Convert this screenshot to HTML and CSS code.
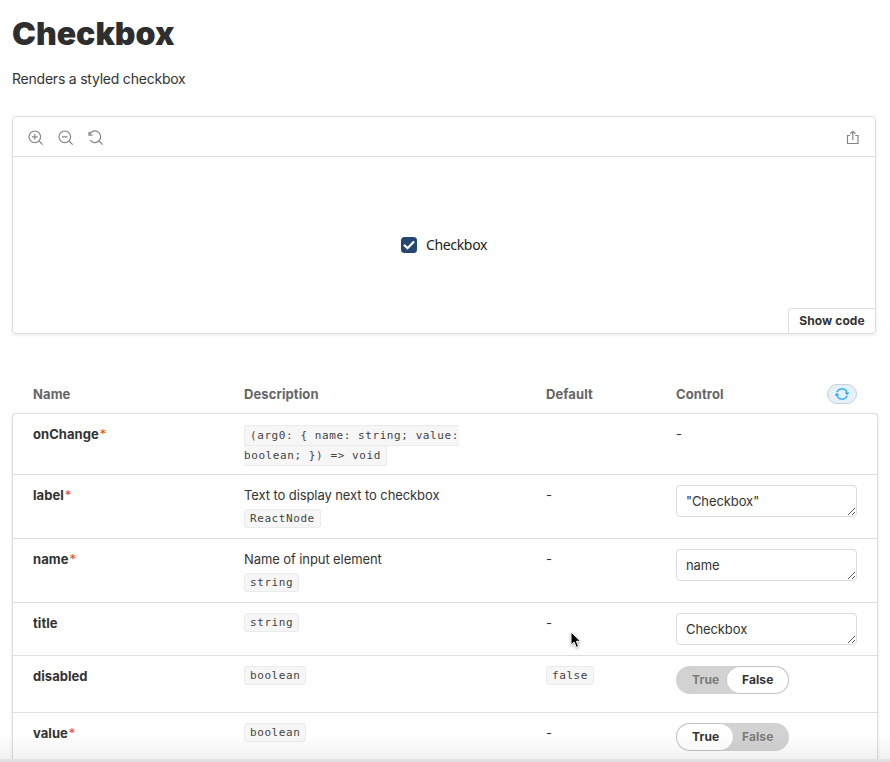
FILE: index.html
```html
<!DOCTYPE html>
<html lang="en">
<head>
<meta charset="utf-8">
<title>Checkbox</title>
<link rel="stylesheet" href="styles.css">
</head>
<body>
<main class="page">
  <h1 class="title"><span>Checkbox</span></h1>
  <p class="subtitle">Renders a styled checkbox</p>

  <section class="preview">
    <div class="toolbar">
      <svg class="icon" viewBox="0 0 16 16"><circle cx="6.8" cy="6.8" r="5.8"/><path d="M11 11l3.7 3.7M6.8 4v5.6M4 6.8h5.6"/></svg>
      <svg class="icon" viewBox="0 0 16 16"><circle cx="6.8" cy="6.8" r="5.8"/><path d="M11 11l3.7 3.7M4 6.8h5.6"/></svg>
      <svg class="icon" viewBox="0 0 16 16"><path d="M1 1.7v3.5h3.5M1.3 5A5.8 5.8 0 1 1 2 10M11 11l3.7 3.7"/></svg>
      <svg class="icon share" viewBox="0 0 16 16"><path d="M5.2 5.5H2.5v8h10.5V5.5h-2.7M7.8 10V1.5M5.3 3.7l2.5-2.4 2.5 2.4"/></svg>
    </div>
    <div class="stage">
      <label class="check">
        <svg class="box" viewBox="0 0 16 16"><rect width="16" height="16" rx="3.5"/><path d="M3 7.8l3.5 3.4 6.5-6.8"/></svg>
        <span>Checkbox</span>
      </label>
    </div>
    <div class="show-code">Show code</div>
  </section>

  <section class="args">
    <div class="row head">
      <span>Name</span><span>Description</span><span>Default</span>
      <span class="control-head"><span>Control</span>
        <span class="reset"><svg viewBox="0 0 14 14"><path d="M2 5.2A5.3 5.3 0 0 1 12.2 6.6M12 8.8A5.3 5.3 0 0 1 1.8 7.4M10.3 5.6l1.9 1.5 1.6-1.5M.2 8.4L1.8 6.9l1.9 1.5"/></svg></span>
      </span>
    </div>
    <div class="table">
      <div class="row r1">
        <div class="name">onChange<i>*</i></div>
        <div class="signature"><code>(arg0: { name: string; value:<br>boolean; }) =&gt; void</code></div>
        <div></div>
        <div>-</div>
      </div>
      <div class="row r2">
        <div class="name">label<i>*</i></div>
        <div>Text to display next to checkbox<div class="type"><code>ReactNode</code></div></div>
        <div>-</div>
        <div class="control"><div class="field">"Checkbox"<svg viewBox="0 0 9 9"><path d="M1 8l7-7M5 8l3-3"/></svg></div></div>
      </div>
      <div class="row r2">
        <div class="name">name<i>*</i></div>
        <div>Name of input element<div class="type"><code>string</code></div></div>
        <div>-</div>
        <div class="control"><div class="field">name<svg viewBox="0 0 9 9"><path d="M1 8l7-7M5 8l3-3"/></svg></div></div>
      </div>
      <div class="row r3">
        <div class="name">title</div>
        <div class="chip"><code>string</code></div>
        <div>-</div>
        <div class="control"><div class="field">Checkbox<svg viewBox="0 0 9 9"><path d="M1 8l7-7M5 8l3-3"/></svg></div></div>
      </div>
      <div class="row r4">
        <div class="name">disabled</div>
        <div class="chip"><code>boolean</code></div>
        <div class="chip"><code>false</code></div>
        <div class="control"><div class="toggle"><span class="t">True</span><span class="f on">False</span></div></div>
      </div>
      <div class="row r5">
        <div class="name">value<i>*</i></div>
        <div class="chip"><code>boolean</code></div>
        <div>-</div>
        <div class="control"><div class="toggle"><span class="t on">True</span><span class="f">False</span></div></div>
      </div>
    </div>
  </section>
</main>
<div class="fade"></div>
<svg class="cursor" viewBox="0 0 12 18"><path d="M1 1v13l3.1-2.9 2.2 5.2 2.3-1-2.2-5h4.2z"/></svg>
</body>
</html>
```
FILE: styles.css
```css
* { box-sizing: border-box; }
body {
  margin: 0;
  height: 762px;
  overflow: hidden;
  position: relative;
  background: #fff;
  color: #333;
  font: 13px/20px Inter, "Liberation Sans", sans-serif;
}
.page { padding: 14px 12px 0; width: 890px; height: 762px; }
.title { margin: 0; font-size: 32px; line-height: 40px; font-weight: 900; letter-spacing: 0; color: #2e2e2e; }
.title span { display: inline-block; }
.subtitle { margin: 15px 0 27px; font-size: 14px; line-height: 20px; letter-spacing: -.22px; }

.preview {
  width: 864px;
  height: 218px;
  border: 1px solid #dedede;
  border-radius: 4px;
  box-shadow: 0 1px 3px rgba(0, 0, 0, .1);
  display: flex;
  flex-direction: column;
}
.toolbar {
  height: 40px;
  flex: none;
  border-bottom: 1px solid #dedede;
  display: flex;
  align-items: center;
  gap: 14px;
  padding: 2px 14px 0 15px;
}
.icon { width: 16px; height: 16px; fill: none; stroke: #858585; stroke-width: 1.2; }
.share { margin-left: auto; }
.stage { height: 151px; flex: none; display: flex; justify-content: center; padding: 78px 0 0; }
.check { display: flex; height: 20px; align-items: center; gap: 9px; font: 14px/20px "Noto Sans", sans-serif; letter-spacing: -.33px; color: #222; }
.box { width: 16px; height: 16px; fill: #244871; }
.box path { fill: none; stroke: #fff; stroke-width: 2.2; }
.show-code {
  align-self: flex-end;
  width: 87px;
  height: 25px;
  border: 1px solid #dedede;
  border-width: 1px 0 0 1px;
  border-radius: 4px 0 0 0;
  font-size: 12px;
  line-height: 24px;
  font-weight: 700;
  letter-spacing: .1px;
  text-align: center;
}

.args { margin-top: 50px; width: 866px; }
.row { display: grid; grid-template-columns: 211px 302px 130px 181px; padding: 10px 0 0 20px; }
.head { height: 29px; padding: 0 0 0 21px; font-weight: 700; letter-spacing: .1px; color: #666; }
.control-head { display: flex; justify-content: space-between; }
.reset { width: 30px; height: 20px; border: 1px solid #c8d0d8; border-radius: 10px; background: #e5f0fa; display: flex; align-items: center; justify-content: center; }
.reset svg { width: 14px; height: 14px; fill: none; stroke: #1ea7fd; stroke-width: 1.2; }
.table { border: 1px solid #dedede; border-bottom: 0; border-radius: 4px 4px 0 0; box-shadow: 0 1px 3px rgba(0, 0, 0, .12); height: 349px; }
.table .row + .row { border-top: 1px solid #dedede; }
.r1 { height: 60px; }
.r2 { height: 64px; }
.r3 { height: 53px; }
.r4 { height: 57px; }
.r5 { height: 50px; }
.table .row > div { letter-spacing: -.09px; }
.table .row > .name { letter-spacing: .05px; }
.name { font-weight: 700; }
.name i { font-style: normal; font-weight: 400; color: #f04a1d; margin-left: 1px; }
code {
  font: 11px/16px "DejaVu Sans Mono", monospace;
  letter-spacing: .58px;
  color: #444;
  background: #f6f6f6;
  border: 1px solid #ebebeb;
  border-radius: 3px;
  padding: 2px 5px;
}
.signature code { white-space: pre; padding: 3px 5px; }
.type code, .chip code { display: inline-block; height: 19px; line-height: 15px; padding: 1px 5px; vertical-align: top; }
.type { padding-top: 4px; }
.field { position: relative; width: 181px; height: 32px; border: 1px solid #dcdcdc; border-radius: 4px; padding: 5px 9px; }
.field svg { position: absolute; right: 0; bottom: 0; width: 9px; height: 9px; fill: none; stroke: #444; stroke-width: .9; }
.toggle { width: 113px; height: 28px; border-radius: 14px; background: #d2d2d2; display: flex; font-size: 12px; line-height: 28px; font-weight: 700; letter-spacing: .1px; color: #7b7b7b; }
.toggle span { border-radius: 14px; height: 28px; }
.toggle .t { width: 50px; padding-left: 16px; }
.toggle .f { width: 63px; padding-left: 16px; }
.toggle .on { background: #fff; box-shadow: inset 0 0 0 1px #c4c4c4; color: #333; }
.toggle .t.on { width: 58px; }
.toggle .t.on + .f { width: 55px; padding-left: 8px; }
.fade { position: absolute; left: 0; right: 0; bottom: 0; height: 27px; border-bottom: 3px solid #dfe1e3; background: linear-gradient(rgba(0, 0, 0, 0), rgba(0, 0, 0, .055)); background-clip: padding-box; }
.cursor { position: absolute; left: 570px; top: 631px; width: 12px; height: 18px; fill: #000; stroke: #fff; stroke-width: 1; filter: drop-shadow(0 1px 1px rgba(0, 0, 0, .35)); }
```
